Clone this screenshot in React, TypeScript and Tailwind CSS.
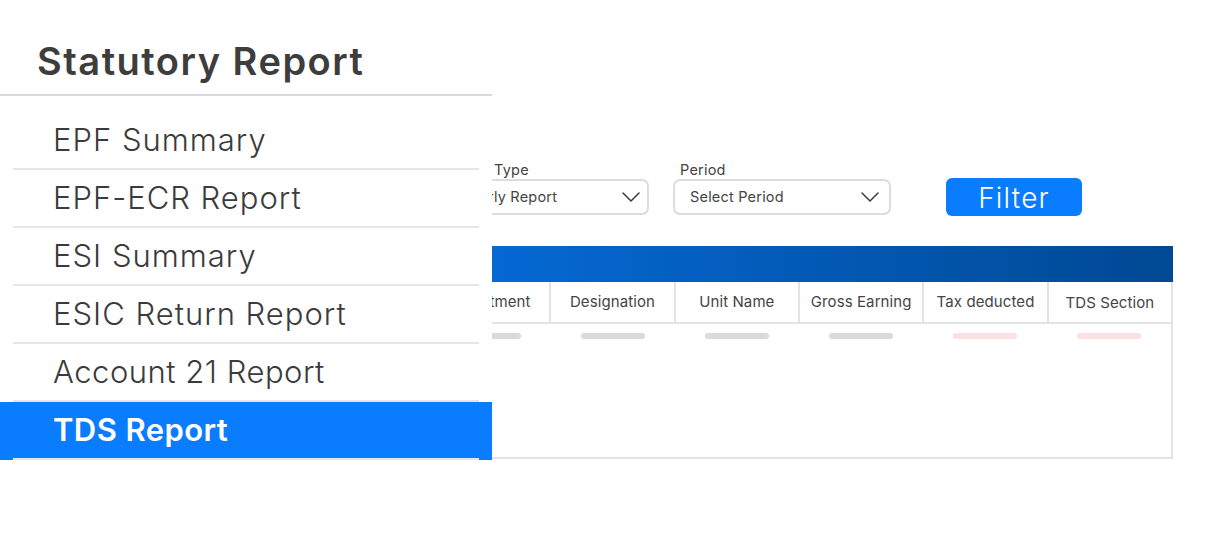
import React from "react";

const menu = ["EPF Summary", "EPF-ECR Report", "ESI Summary", "ESIC Return Report", "Account 21 Report", "TDS Report"];
const cols = ["Department", "Designation", "Unit Name", "Gross Earning", "Tax deducted", "TDS Section"];

function Chevron() {
  return (
    <svg width="18" height="10" viewBox="0 0 18 10" fill="none" className="shrink-0">
      <polyline points="1,1 9,9 17,1" stroke="#3a3a3a" strokeWidth="1.5" strokeLinecap="round" strokeLinejoin="round" />
    </svg>
  );
}

export default function App() {
  return (
    <div className="relative w-[1212px] h-[550px] bg-white overflow-hidden font-['Inter',sans-serif] text-[#3b3b3b]">
      {/* background content */}
      <div className="pl-[427px] pt-[161px]">
        <div className="flex items-end pl-[9px]">
          <div className="flex flex-col">
            <span className="pl-[7px] text-[14.5px] leading-[18px] tracking-[0.2px] text-[#444]">Report Type</span>
            <div className="flex h-[36px] w-[213px] items-center justify-between rounded-[7px] border-2 border-[#dcdcdc] pl-[24px] pr-[7px]">
              <span className="text-[14.5px] tracking-[0.2px] text-[#444]">Yearly Report</span>
              <Chevron />
            </div>
          </div>
          <div className="ml-[24px] flex flex-col">
            <span className="pl-[7px] text-[14.5px] leading-[18px] tracking-[0.2px] text-[#444]">Period</span>
            <div className="flex h-[36px] w-[218px] items-center justify-between rounded-[7px] border-2 border-[#dcdcdc] pl-[15px] pr-[10px]">
              <span className="text-[14.5px] tracking-[0.2px] text-[#444]">Select Period</span>
              <Chevron />
            </div>
          </div>
          <button className="ml-[55px] mb-[-1px] flex h-[38px] w-[136px] items-center justify-center rounded-[6px] bg-[#0a7cff] pt-[2px] text-[28px] font-light tracking-[1.2px] text-white">
            Filter
          </button>
        </div>
        <div className="mt-[31px] w-[746px]">
          <div className="h-[36px] bg-linear-to-r from-[#066cda] to-[#004994]" />
          <div className="grid grid-cols-6 border-b-2 border-[#e3e3e3]">
            {cols.map((c, i) => (
              <div
                key={c}
                className={`flex h-[40px] items-center justify-center border-r-2 border-[#e3e3e3] text-[15px] tracking-[0.1px] text-[#444] ${i === 5 ? "pt-[3px]" : ""}`}
              >
                {c}
              </div>
            ))}
          </div>
          <div className="grid h-[135px] grid-cols-6 border-r-2 border-b-2 border-[#e3e3e3]">
            {cols.map((c, i) => (
              <div key={c} className="flex justify-center pt-[9px]">
                <div className={`h-[6px] w-[64px] rounded-full ${i >= 4 ? "bg-[#fae0e0]" : "bg-[#dadada]"}`} />
              </div>
            ))}
          </div>
        </div>
      </div>

      {/* overlay menu */}
      <div className="absolute left-0 top-0 w-[492px] bg-white">
        <div className="flex h-[96px] items-end border-b-2 border-[#d9d9d9] pb-[14px] pl-[37px]">
          <h1 className="text-[38px] font-semibold leading-none tracking-[1.5px] text-[#3d3d3d]">Statutory Report</h1>
        </div>
        <div className="pt-[16px]">
          {menu.map((m) => {
            const active = m === "TDS Report";
            const tight = m === "Account 21 Report";
            return (
              <div key={m} className={active ? "bg-[#0a7cff]" : ""}>
                <div className="mx-[13px] flex h-[58px] items-center border-b-2 border-[#e6e6e6] pl-[40px]">
                  <span
                    className={
                      active
                        ? "text-[31px] font-semibold tracking-[0.4px] text-white"
                        : tight
                        ? "text-[31px] font-light tracking-[0.5px] text-[#3b3b3b]"
                        : "text-[31px] font-light tracking-[1px] text-[#3b3b3b]"
                    }
                  >
                    {m}
                  </span>
                </div>
              </div>
            );
          })}
        </div>
      </div>
    </div>
  );
}
